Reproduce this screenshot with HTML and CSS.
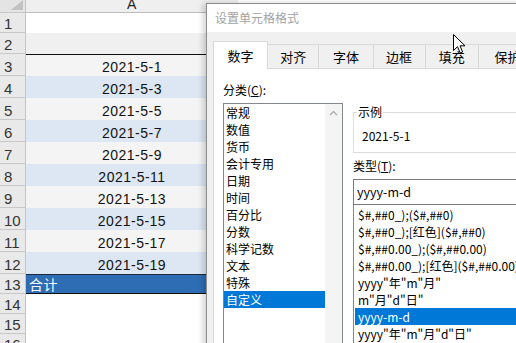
FILE: index.html
```html
<!DOCTYPE html>
<html lang="zh-CN">

<head>
    <meta charset="UTF-8">
    <title>设置单元格格式</title>
    <link rel="stylesheet" href="styles.css">
</head>

<body>
    <div class="screen">
        <div class="sheet">
            <div class="row head">
                <div class="rh corner">
                    <svg width="14" height="10" viewBox="0 0 14 10"><path d="M14 0 L14 10 L2 10 Z" fill="#c2c2c2"/></svg>
                </div>
                <div class="cell colhead">A</div>
            </div>
            <div class="row r1"><div class="rh">1</div><div class="cell"></div></div>
            <div class="row r2"><div class="rh">2</div><div class="cell"></div></div>
            <div class="row data odd"><div class="rh">3</div><div class="cell">2021-5-1</div></div>
            <div class="row data even"><div class="rh">4</div><div class="cell">2021-5-3</div></div>
            <div class="row data odd"><div class="rh">5</div><div class="cell">2021-5-5</div></div>
            <div class="row data even"><div class="rh">6</div><div class="cell">2021-5-7</div></div>
            <div class="row data odd"><div class="rh">7</div><div class="cell">2021-5-9</div></div>
            <div class="row data even"><div class="rh">8</div><div class="cell">2021-5-11</div></div>
            <div class="row data odd"><div class="rh">9</div><div class="cell">2021-5-13</div></div>
            <div class="row data even"><div class="rh">10</div><div class="cell">2021-5-15</div></div>
            <div class="row data odd"><div class="rh">11</div><div class="cell">2021-5-17</div></div>
            <div class="row data even"><div class="rh">12</div><div class="cell">2021-5-19</div></div>
            <div class="row total"><div class="rh">13</div><div class="cell">合计</div></div>
            <div class="row empty"><div class="rh">14</div><div class="cell"></div></div>
            <div class="row empty"><div class="rh">15</div><div class="cell"></div></div>
            <div class="row empty"><div class="rh">16</div><div class="cell"></div></div>
        </div>

        <!-- format cells dialog, lies over the sheet -->
        <div class="dialog">
            <div class="titlebar">设置单元格格式</div>
            <div class="dlg-body">
                <div class="tabs">
                    <div class="tab active">数字</div>
                    <div class="tab t2">对齐</div>
                    <div class="tab t3">字体</div>
                    <div class="tab t4">边框</div>
                    <div class="tab t5">填充</div>
                    <div class="tab t6">保护</div>
                </div>
                <div class="panel">
                    <div class="left">
                        <div class="label">分类(<u>C</u>):</div>
                        <div class="listbox">
                            <div class="items">
                                <div class="item">常规</div>
                                <div class="item">数值</div>
                                <div class="item">货币</div>
                                <div class="item">会计专用</div>
                                <div class="item">日期</div>
                                <div class="item">时间</div>
                                <div class="item">百分比</div>
                                <div class="item">分数</div>
                                <div class="item">科学记数</div>
                                <div class="item">文本</div>
                                <div class="item">特殊</div>
                                <div class="item selected">自定义</div>
                            </div>
                            <div class="scroll">
                                <svg width="9" height="6" viewBox="0 0 9 6"><path d="M1 5 L4.5 1.5 L8 5" fill="none" stroke="#a6a6a6" stroke-width="1.2"/></svg>
                            </div>
                        </div>
                    </div>
                    <div class="right">
                        <fieldset class="sample">
                            <legend>示例</legend>
                            <div class="sample-value">2021-5-1</div>
                        </fieldset>
                        <div class="label type-label">类型(<u>T</u>):</div>
                        <div class="textbox">yyyy-m-d</div>
                        <div class="typelist">
                            <div class="item">$#,##0_);($#,##0)</div>
                            <div class="item">$#,##0_);[红色]($#,##0)</div>
                            <div class="item">$#,##0.00_);($#,##0.00)</div>
                            <div class="item">$#,##0.00_);[红色]($#,##0.00)</div>
                            <div class="item">yyyy"年"m"月"</div>
                            <div class="item">m"月"d"日"</div>
                            <div class="item selected">yyyy-m-d</div>
                            <div class="item">yyyy"年"m"月"d"日"</div>
                        </div>
                    </div>
                </div>
            </div>
        </div>

        <svg class="cursor" width="13" height="20" viewBox="0 0 13 20">
            <path d="M0.5 0.5 L0.5 16.5 L4.5 12.7 L7.2 19 L9.6 18 L7 11.8 L12 11.8 Z" fill="#fff" stroke="#000" stroke-width="1"/>
        </svg>
    </div>
</body>

</html>
```

FILE: styles.css
```css
body {
    margin: 0;
    background: #fff;
}

.screen {
    position: relative;
    width: 516px;
    height: 343px;
    overflow: hidden;
    background: #fff;
}

/* spreadsheet */
.sheet {
    font-family: "Liberation Sans", "Noto Sans CJK SC", sans-serif;
    width: 238px;
}

.row {
    display: flex;
    height: 22px;
}

.rh {
    width: 26px;
    box-sizing: border-box;
    flex-shrink: 0;
    background: #e9e9e9;
    border-right: 1px solid #c4c4c4;
    border-bottom: 1px solid #c8c8c8;
    color: #333;
    font-size: 15px;
    padding-left: 4px;
    display: flex;
    align-items: flex-end;
    line-height: 17px;
}

.cell {
    flex: 1;
    display: flex;
    align-items: flex-end;
    justify-content: center;
    font-size: 14px;
    letter-spacing: 0.5px;
    color: #111;
    line-height: 18px;
    box-sizing: border-box;
}

.head {
    height: 13px;
}

.head .rh {
    background: #e4e4e4;
    padding: 0;
    justify-content: flex-end;
    align-items: flex-start;
    padding-right: 2px;
}

.colhead {
    background: #efefef;
    border-bottom: 1px solid #bcbcbc;
    align-items: flex-start;
    line-height: 12px;
    font-size: 14px;
    color: #222;
    margin-top: -2px;
}

.r1 {
    height: 20px;
}

.r2 {
    height: 21px;
}

.r2 .cell {
    background: #f1f0f0;
}

.odd .cell {
    background: #f5f4f4;
}

.even .cell {
    background: #dce7f3;
}

.r2 + .data .cell {
    border-top: 1px solid #111;
}

.total {
    height: 20px;
}

.total .cell {
    background: #2e6db4;
    color: #fff;
    justify-content: flex-start;
    padding-left: 3px;
    border-top: 1px solid #1b2a3c;
    border-bottom: 1px solid #111;
    font-family: "Noto Sans CJK SC", sans-serif;
    line-height: 18px;
}

.empty {
    height: 20px;
}

/* dialog */
.dialog {
    position: absolute;
    left: 206px;
    top: 3px;
    width: 330px;
    height: 360px;
    border: 1px solid #8c8c8c;
    background: #f0f0f0;
    box-shadow: -3px 0 6px rgba(0, 0, 0, 0.18);
    font-family: "Noto Sans CJK SC", sans-serif;
    font-size: 12px;
    color: #000;
}

.titlebar {
    height: 28px;
    background: #fff;
    color: #a3a3a3;
    padding-left: 8px;
    line-height: 27px;
    font-size: 12px;
}

.dlg-body {
    padding: 9px 0 0 6px;
}

.tabs {
    display: flex;
    align-items: flex-end;
    height: 27px;
}

.tab {
    height: 24px;
    box-sizing: border-box;
    border: 1px solid #d9d9d9;
    border-bottom: 0;
    margin-left: -1px;
    background: #f0f0f0;
    text-align: center;
    line-height: 24px;
    font-size: 13px;
}

.tab.active {
    height: 28px;
    margin-left: 0;
    margin-bottom: -1px;
    background: #fff;
    position: relative;
    z-index: 1;
    width: 56px;
    line-height: 27px;
}

.t2 { width: 53px; }
.t3 { width: 56px; }
.t4 { width: 54px; }
.t5 { width: 55px; }
.t6 { width: 60px; }

.panel {
    background: #fff;
    border: 1px solid #d9d9d9;
    height: 300px;
    display: flex;
    gap: 10px;
    padding: 13px 0 0 9px;
}

.label {
    line-height: 16px;
    margin-bottom: 5px;
}

.listbox {
    width: 120px;
    height: 260px;
    box-sizing: border-box;
    border: 1px solid #828790;
    display: flex;
}

.items {
    flex: 1;
}

.item {
    height: 17px;
    line-height: 17px;
    padding-left: 2px;
    white-space: nowrap;
}

.item.selected {
    background: #0078d7;
    color: #fff;
}

.scroll {
    width: 17px;
    background: #f4f4f4;
    display: flex;
    justify-content: center;
    padding-top: 6px;
    box-sizing: border-box;
}

.right {
    width: 200px;
}

.sample {
    margin: 22px 0 0 0;
    padding: 8px 8px 4px 8px;
    border: 1px solid #dcdcdc;
    height: 49px;
    box-sizing: border-box;
}

.sample legend {
    padding: 0 1px;
    margin-left: -5px;
    line-height: 16px;
}

.sample-value {
    line-height: 16px;
}

.type-label {
    margin-top: 5px;
    margin-bottom: 5px;
}

.textbox {
    height: 26px;
    box-sizing: border-box;
    border: 1px solid #7a7a7a;
    padding-left: 3px;
    line-height: 24px;
    font-size: 12.5px;
}

.typelist {
    border-left: 1px solid #828790;
    padding-top: 1px;
    height: 160px;
}

.typelist .item {
    padding-left: 3px;
    margin-left: 1px;
}

.cursor {
    position: absolute;
    left: 453px;
    top: 34px;
}
```
